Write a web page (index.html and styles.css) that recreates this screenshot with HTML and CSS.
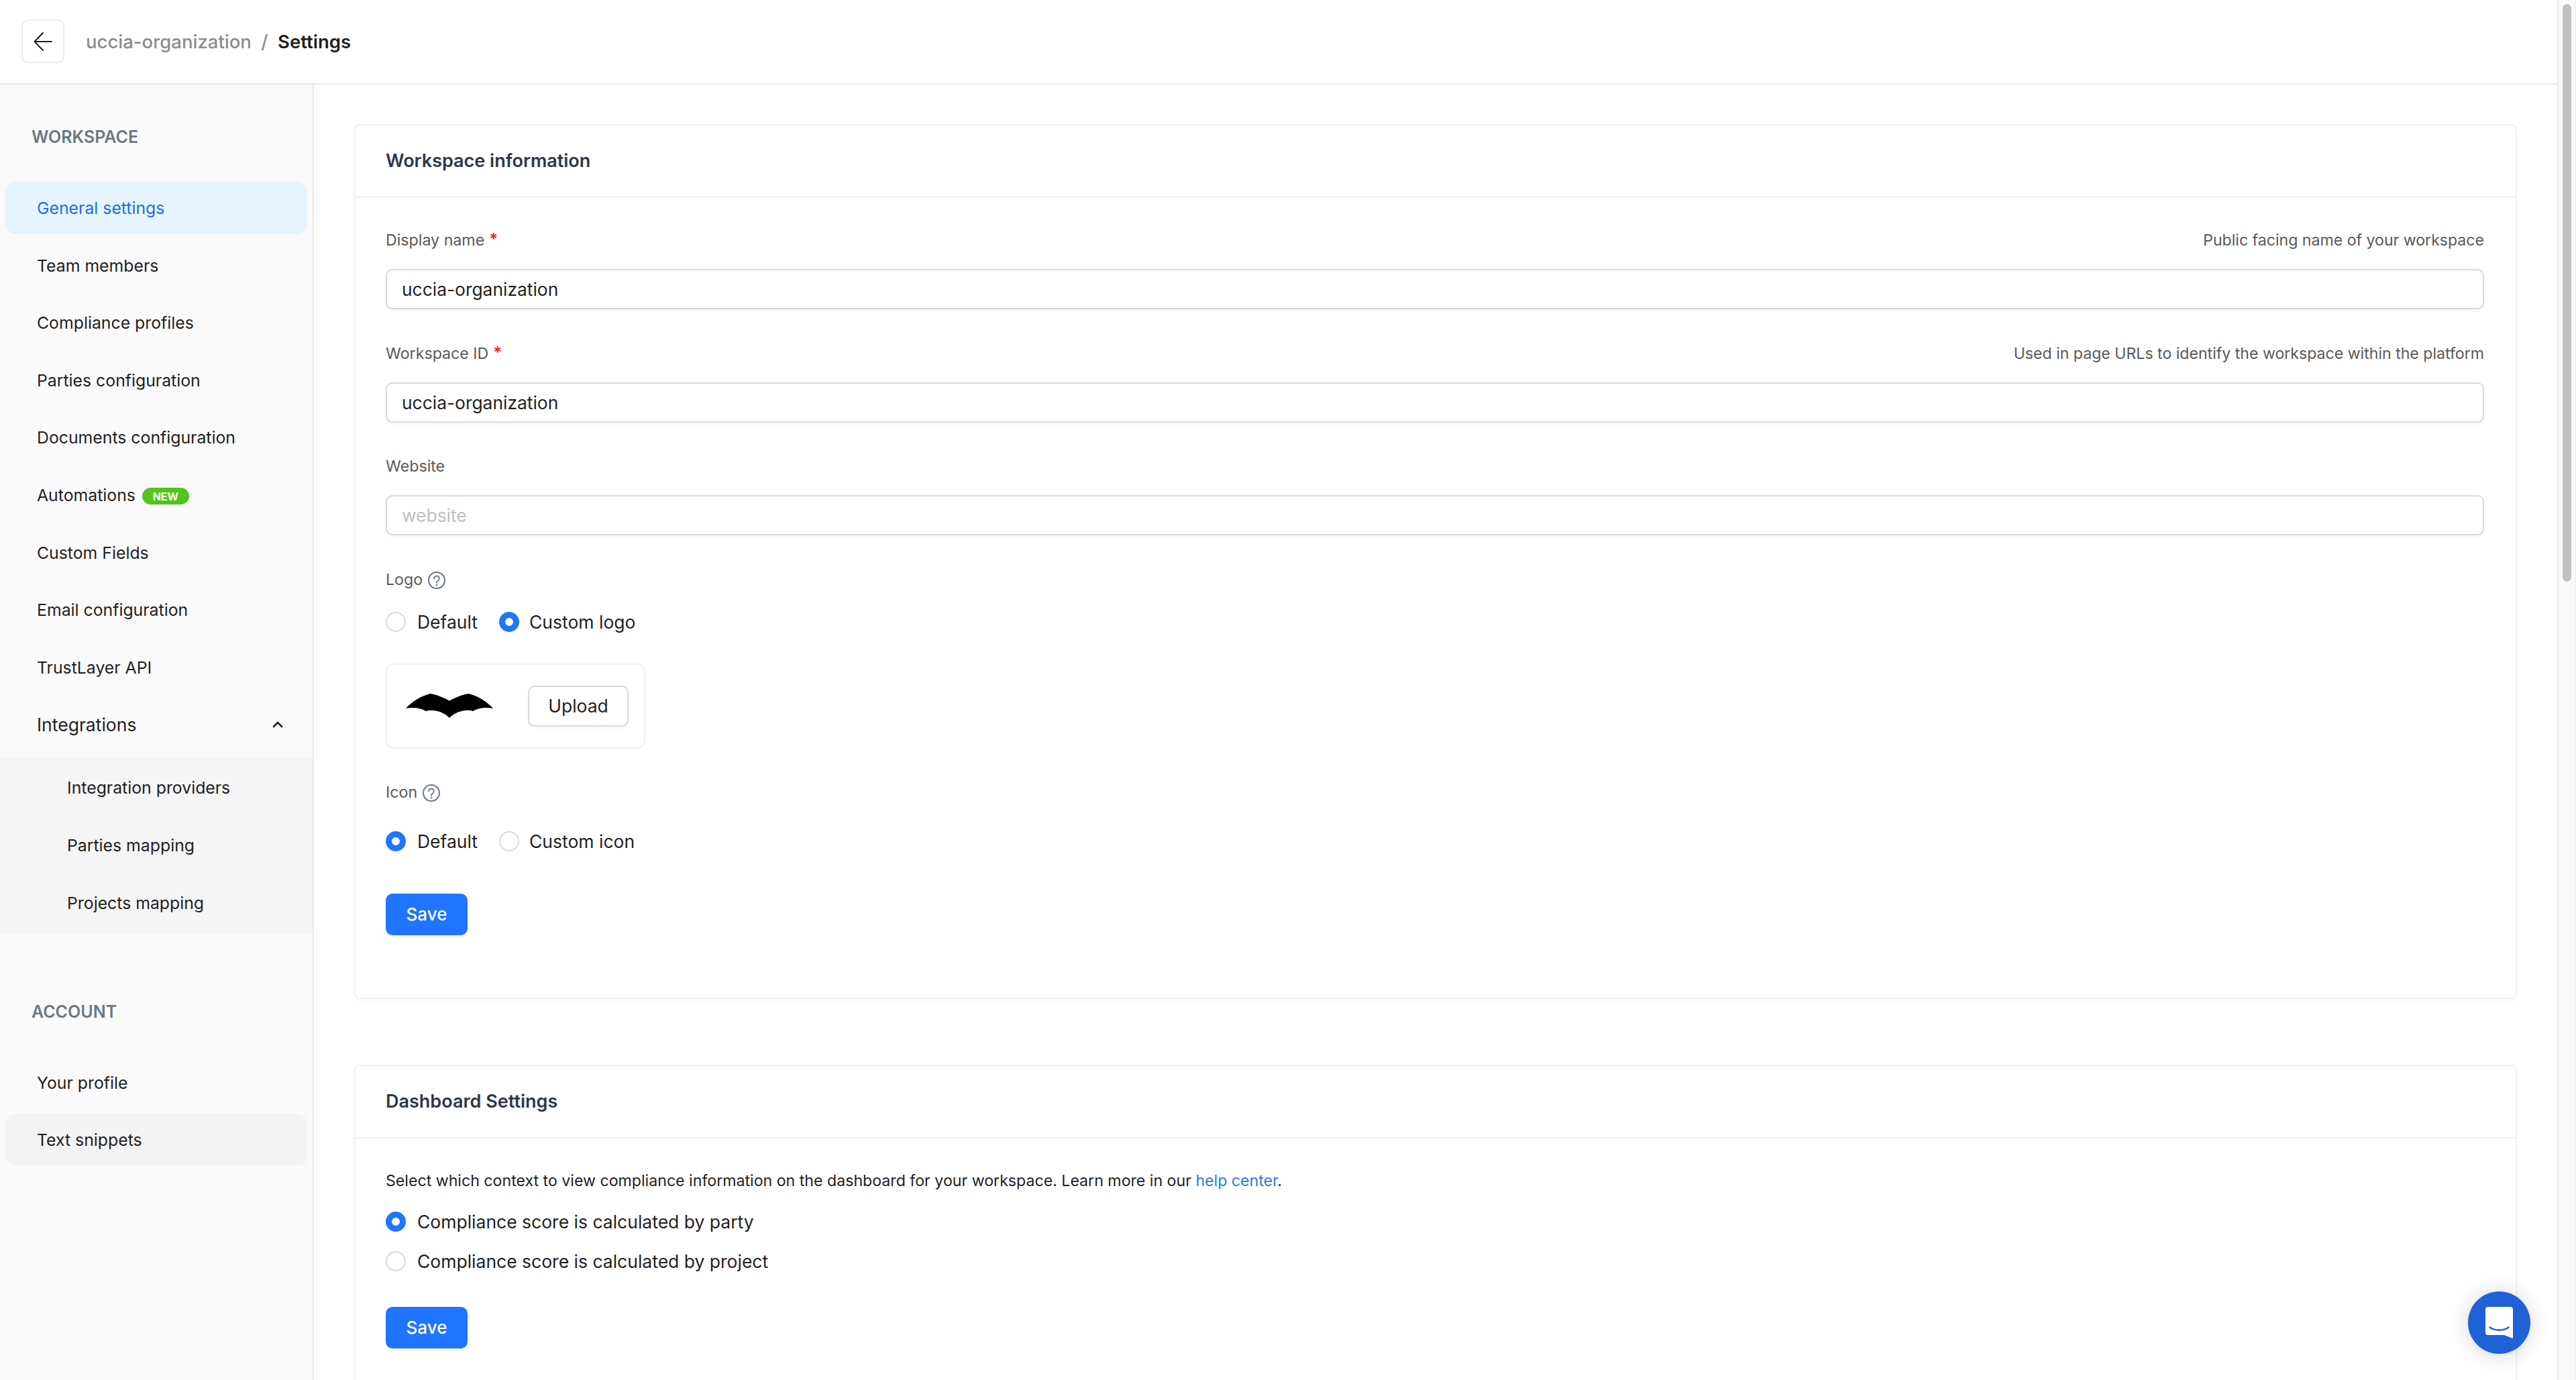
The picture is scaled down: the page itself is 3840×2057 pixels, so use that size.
FILE: index.html
```html
<!DOCTYPE html>
<html lang="en">
<head>
<meta charset="utf-8">
<title>Settings</title>
<link rel="stylesheet" href="styles.css">
</head>
<body>
<div class="page">
  <header class="topbar">
    <button class="back" type="button" aria-label="Back">
      <svg class="back-icon" viewBox="0 0 28 28" fill="none" stroke="currentColor" stroke-width="2" stroke-linecap="round" stroke-linejoin="round"><path d="M27 14H2M14 1 1.500 14 14 27"/></svg>
    </button>
    <nav class="crumbs">
      <span class="crumb">uccia-organization</span>
      <span class="crumb-sep">/</span>
      <span class="crumb-current">Settings</span>
    </nav>
  </header>
  <div class="layout">
    <aside class="sidebar">
      <div class="side-heading">WORKSPACE</div>
      <ul class="side-list">
        <li class="side-item active">General settings</li>
        <li class="side-item">Team members</li>
        <li class="side-item">Compliance profiles</li>
        <li class="side-item">Parties configuration</li>
        <li class="side-item">Documents configuration</li>
        <li class="side-item">Automations <span class="badge">NEW</span></li>
        <li class="side-item">Custom Fields</li>
        <li class="side-item">Email configuration</li>
        <li class="side-item">TrustLayer API</li>
        <li class="side-item group">Integrations
          <svg class="chevron" viewBox="0 0 16 10" fill="none" stroke="currentColor" stroke-width="2.6" stroke-linecap="round" stroke-linejoin="round"><path d="M2 8l6-6 6 6"/></svg>
        </li>
      </ul>
      <ul class="side-sub">
        <li class="side-item sub">Integration providers</li>
        <li class="side-item sub">Parties mapping</li>
        <li class="side-item sub">Projects mapping</li>
      </ul>
      <div class="side-heading account">ACCOUNT</div>
      <ul class="side-list">
        <li class="side-item">Your profile</li>
        <li class="side-item hover">Text snippets</li>
      </ul>
    </aside>
    <main class="main">
      <section class="card">
        <h2 class="card-title">Workspace information</h2>
        <div class="card-body">
          <div class="field">
            <div class="label-row"><label class="label">Display name<span class="req">*</span></label><span class="hint">Public facing name of your workspace</span></div>
            <input class="input" type="text" value="uccia-organization">
          </div>
          <div class="field">
            <div class="label-row"><label class="label">Workspace ID<span class="req">*</span></label><span class="hint">Used in page URLs to identify the workspace within the platform</span></div>
            <input class="input" type="text" value="uccia-organization">
          </div>
          <div class="field">
            <div class="label-row"><label class="label">Website</label></div>
            <input class="input" type="text" placeholder="website">
          </div>
          <div class="label-row"><span class="label">Logo</span>
            <svg class="help" viewBox="0 0 26 26" fill="none" stroke="currentColor" stroke-width="2" stroke-linecap="round"><circle cx="13" cy="13" r="12"/><path d="M9.200 10.300a3.800 3.800 0 1 1 5.900 3.200c-1.300.8-2.100 1.500-2.100 3"/><circle cx="13" cy="20" r=".5"/></svg>
          </div>
          <div class="radios logo-radios">
            <span class="radio-opt"><span class="radio"></span>Default</span>
            <span class="radio-opt"><span class="radio on"></span>Custom logo</span>
          </div>
          <div class="upload-box">
            <svg class="bat" viewBox="0 0 130 37"><path d="M0 23C10 12 22 5 36 1c10 1 20 6 29 10.500C74 7 84 2 94 1c14 4 26 11 36 22-10-2-22-1-30 4-8-3-24-1-35 10-11-11-27-13-35-10C22 22 10 21 0 23Z"/></svg>
            <button class="btn" type="button">Upload</button>
          </div>
          <div class="label-row"><span class="label">Icon</span>
            <svg class="help" viewBox="0 0 26 26" fill="none" stroke="currentColor" stroke-width="2" stroke-linecap="round"><circle cx="13" cy="13" r="12"/><path d="M9.200 10.300a3.800 3.800 0 1 1 5.900 3.200c-1.300.8-2.100 1.500-2.100 3"/><circle cx="13" cy="20" r=".5"/></svg>
          </div>
          <div class="radios icon-radios">
            <span class="radio-opt"><span class="radio on"></span>Default</span>
            <span class="radio-opt"><span class="radio"></span>Custom icon</span>
          </div>
          <button class="btn primary save-one" type="button">Save</button>
        </div>
      </section>
      <section class="card">
        <h2 class="card-title">Dashboard Settings</h2>
        <div class="card-body">
          <p class="intro">Select which context to view compliance information on the dashboard for your workspace. Learn more in our <a class="link" href="#">help center</a>.</p>
          <div class="radio-stack">
            <span class="radio-opt"><span class="radio on"></span>Compliance score is calculated by party</span>
            <span class="radio-opt"><span class="radio"></span>Compliance score is calculated by project</span>
          </div>
          <button class="btn primary" type="button">Save</button>
        </div>
      </section>
    </main>
  </div>
</div>
<div class="scrollbar"><div class="thumb"></div></div>
<button class="fab" type="button" aria-label="Open chat">
  <svg class="fab-icon" viewBox="0 0 41 47"><path fill="#fff" d="M4 0h33a4 4 0 0 1 4 4v43l-13-5H4a4 4 0 0 1-4-4V4a4 4 0 0 1 4-4Z"/><path fill="none" stroke="#1f62d8" stroke-width="2.600" stroke-linecap="round" d="M6.500 30.500c8 5.500 20 5.500 28 0"/></svg>
</button>
</body>
</html>
```
FILE: styles.css
```css
* { box-sizing: border-box; }
html, body { margin: 0; height: 100%; overflow: hidden; }
body {
  display: flex;
  background: #fff;
  color: #1f1f1f;
  font-family: Inter, "Liberation Sans", sans-serif;
  font-size: 26.500px;
  line-height: 36px;
}
ul { list-style: none; margin: 0; padding: 0; }
button, input { font: inherit; }

.page { flex: 1; min-width: 0; height: 100%; display: flex; flex-direction: column; }

.topbar {
  flex: none;
  height: 126px;
  display: flex;
  align-items: center;
  gap: 32px;
  padding: 0 0 1px 32px;
  border-bottom: 2px solid #e8e8e8;
}
.back {
  width: 64px;
  height: 65px;
  padding: 0;
  display: flex;
  align-items: center;
  justify-content: center;
  background: #fff;
  color: #1f1f1f;
  border: 2px solid #ececec;
  border-radius: 10px;
  box-shadow: 0 2px 3px rgba(0, 0, 0, .02);
}
.back-icon { width: 28px; height: 28px; }
.crumbs { display: flex; align-items: center; gap: 14.500px; font-size: 27.500px; font-weight: 500; }
.crumb { color: #8c8c8c; }
.crumb-sep { color: #8c8c8c; }
.crumb-current { color: #1f1f1f; font-weight: 600; }

.layout { flex: 1; min-height: 0; display: flex; }

.sidebar {
  flex: none;
  width: 468px;
  padding-top: 60px;
  background: #fafafa;
  border-right: 2px solid #e8e8e8;
  font-size: 24.800px;
}
.side-heading { padding-left: 47px; color: #6b7785; font-weight: 600; font-size: 25px; }
.side-heading.account { margin-top: 99px; }
.side-heading + .side-list { margin-top: 49px; }
.side-list { display: flex; flex-direction: column; gap: 7.600px; padding: 0 8px; }
.side-item {
  height: 78px;
  display: flex;
  align-items: center;
  padding-left: 47px;
  color: #1f1f1f;
  border-radius: 16px;
}
.side-item.active { background: #e6f4ff; color: #1f6fdc; }
.side-item.hover { background: #f3f3f3; }
.side-item.group { padding-right: 36px; justify-content: space-between; font-size: 26.500px; }
.chevron { width: 16px; height: 10px; }
.badge {
  width: 70px;
  height: 25px;
  margin: 4px 0 0 10px;
  display: inline-flex;
  align-items: center;
  justify-content: center;
  background: #52c41a;
  color: #fff;
  font-size: 16px;
  line-height: 1;
  font-weight: 700;
  border-radius: 13px;
}
.side-sub {
  margin-top: 10px;
  padding: 6px 8px;
  display: flex;
  flex-direction: column;
  gap: 7.600px;
  background: #f5f5f5;
  width: 466px;
}
.side-item.sub { padding-left: 92px; }

.main { flex: 1; min-width: 0; padding: 59px 60px 0; overflow: hidden; }
.card {
  background: #fff;
  border: 2px solid #f2f2f2;
  border-radius: 8px;
  box-shadow: 0 6px 16px rgba(0, 0, 0, .025);
}
.card + .card { margin-top: 98px; }
.card-title {
  margin: 0;
  height: 108px;
  padding-left: 45px;
  display: flex;
  align-items: center;
  font-size: 27px;
  font-weight: 600;
  color: #2d3748;
  border-bottom: 2px solid #f0f0f0;
}
.card-body { padding: 45px 47px 93px 45px; }
.field { margin-bottom: 47.500px; }
.label-row { display: flex; align-items: center; gap: 8px; }
.field .label-row { justify-content: space-between; margin-bottom: 25px; }
.label { color: #595959; font-size: 23.200px; }
.req { color: #f5222d; margin-left: 7px; font-size: 24px; font-weight: 600; position: relative; top: -1px; }
.hint { color: #595959; font-size: 23.100px; }
.help { width: 26px; height: 26px; margin-top: 2px; color: #6b7785; }

.input {
  display: block;
  width: 100%;
  height: 60px;
  padding: 0 22px;
  color: #1f1f1f;
  background: #fff;
  border: 2px solid #d9d9d9;
  border-radius: 10px;
  box-shadow: 0 3px 4px rgba(0, 0, 0, .035);
  outline: none;
  font-size: 26.400px;
}
.input::placeholder { color: #bfbfbf; }

.radios { display: flex; gap: 32px; }
.radios .radio-opt + .radio-opt { gap: 15px; }
.logo-radios { margin-top: 30px; }
.icon-radios { margin-top: 40px; }
.radio-opt { display: inline-flex; align-items: center; gap: 17px; height: 30px; }
.radio {
  flex: none;
  width: 30px;
  height: 30px;
  background: #fff;
  border: 2px solid #d9d9d9;
  border-radius: 50%;
}
.radio.on { background: #fff; border: 9px solid #1f75fe; }

.upload-box {
  width: 387px;
  height: 127px;
  margin: 47px 0;
  padding: 0 23px 0 28px;
  display: flex;
  align-items: center;
  justify-content: space-between;
  border: 2px solid #f0f0f0;
  border-radius: 12px;
}
.bat { width: 130px; height: 37px; margin-top: -2px; fill: #000; }

.btn {
  height: 61px;
  width: 150px;
  padding: 0;
  background: #fff;
  color: #1f1f1f;
  border: 2px solid #d9d9d9;
  border-radius: 10px;
  box-shadow: 0 3px 4px rgba(0, 0, 0, .035);
}
.btn.primary {
  display: block;
  width: 122px;
  height: 62px;
  background: #1f75fe;
  color: #fff;
  border: 0;
  font-size: 26px;
  font-weight: 500;
  box-shadow: 0 3px 0 rgba(0, 0, 0, .03);
}
.save-one { margin-top: 63px; }

.intro { margin: 0 0 28px; font-size: 23.150px; color: #1f1f1f; }
.link { color: #1f7fd8; text-decoration: none; }
.radio-stack { display: flex; flex-direction: column; gap: 29px; align-items: flex-start; margin-bottom: 53px; }

.scrollbar {
  flex: none;
  width: 28px;
  height: 100%;
  padding: 6px 6px 0 6px;
  background: #fafafa;
  border-left: 2px solid #ebebeb;
  border-right: 1px solid #ebebeb;
}
.thumb { height: 861px; background: #c1c1c1; border-radius: 7px; }

.fab {
  position: fixed;
  left: 3679px;
  top: 1925px;
  width: 93px;
  height: 93px;
  padding: 0;
  display: flex;
  align-items: center;
  justify-content: center;
  background: #1f62d8;
  border: 0;
  border-radius: 50%;
  box-shadow: 0 1px 6px rgba(0, 0, 0, .06), 0 2px 32px rgba(0, 0, 0, .16);
}
.fab-icon { width: 41px; height: 47px; }
```
